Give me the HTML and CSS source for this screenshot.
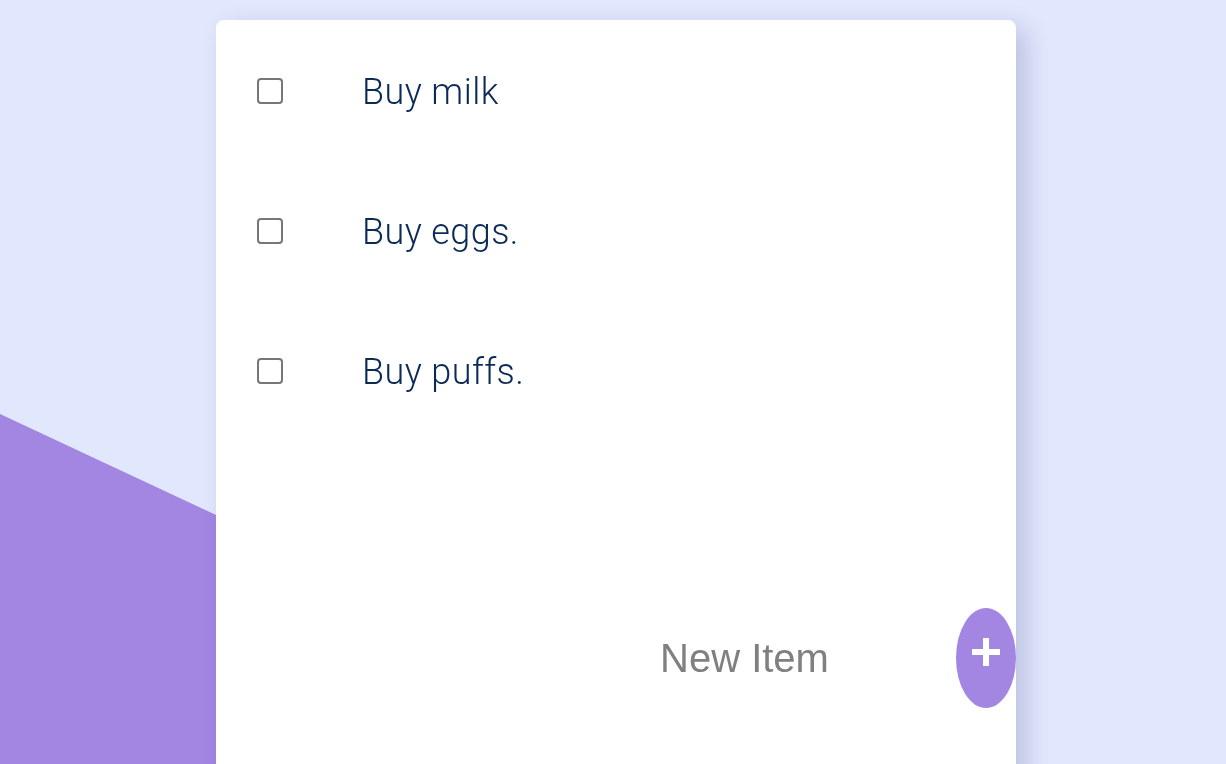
FILE: index.html
```html
<!DOCTYPE html>
<html>
<head>
<meta charset="utf-8">
<link rel="stylesheet" href="styles.css">
</head>
<body>
<div class="backdrop"></div>
<main class="card">
  <ul class="list">
    <li class="item"><span class="check"></span><span class="label">Buy milk</span></li>
    <li class="item"><span class="check"></span><span class="label">Buy eggs.</span></li>
    <li class="item"><span class="check"></span><span class="label">Buy puffs.</span></li>
  </ul>
  <form class="new-form">
    <input class="new-input" type="text" placeholder="New Item">
    <button class="add-btn" type="button" aria-label="Add">
      <svg width="30" height="30" viewBox="0 0 30 30"><path d="M15 1V29M1 15H29" stroke="#fff" stroke-width="6" fill="none"/></svg>
    </button>
  </form>
</main>
</body>
</html>
```

FILE: styles.css
```css
html, body {
  margin: 0;
  padding: 0;
  height: 100%;
  overflow: hidden;
}
body {
  background: #e1e7fc;
  font-family: "Liberation Sans", Arial, sans-serif;
}
.backdrop {
  position: fixed;
  inset: 0;
  background: #a385e2;
  clip-path: polygon(0 414px, 100% 987px, 100% 100%, 0 100%);
}
.card {
  position: relative;
  width: 800px;
  height: 800px;
  margin: 20px 0 0 216px;
  background: #fff;
  border-radius: 8px;
  box-shadow: 10px 8px 24px rgba(40, 50, 110, 0.2);
  overflow: hidden;
}
.list {
  list-style: none;
  margin: 0;
  padding: 1px 0 0 41px;
}
.item {
  height: 140px;
  display: flex;
  align-items: center;
}
.check {
  width: 22px;
  height: 22px;
  border: 2px solid #767676;
  border-radius: 4px;
  flex: none;
}
.label {
  margin-left: 79px;
  font-family: "Roboto", sans-serif;
  font-weight: 300;
  font-size: 36px;
  letter-spacing: 0.4px;
  color: #0b2a55;
  position: relative;
  top: 1px;
}
.new-form {
  display: flex;
  align-items: center;
  justify-content: flex-end;
  margin-top: 167px;
}
.new-input {
  border: none;
  outline: none;
  width: 248px;
  padding: 0;
  margin-right: 48px;
  font-family: "Liberation Sans", Arial, sans-serif;
  font-size: 40px;
  color: #808080;
  background: transparent;
}
.new-input::placeholder {
  color: #808080;
}
.add-btn {
  width: 60px;
  height: 100px;
  border: none;
  border-radius: 50%;
  background: #a385e2;
  display: flex;
  align-items: center;
  justify-content: center;
  padding: 0 0 12px 0;
  cursor: pointer;
}
```
